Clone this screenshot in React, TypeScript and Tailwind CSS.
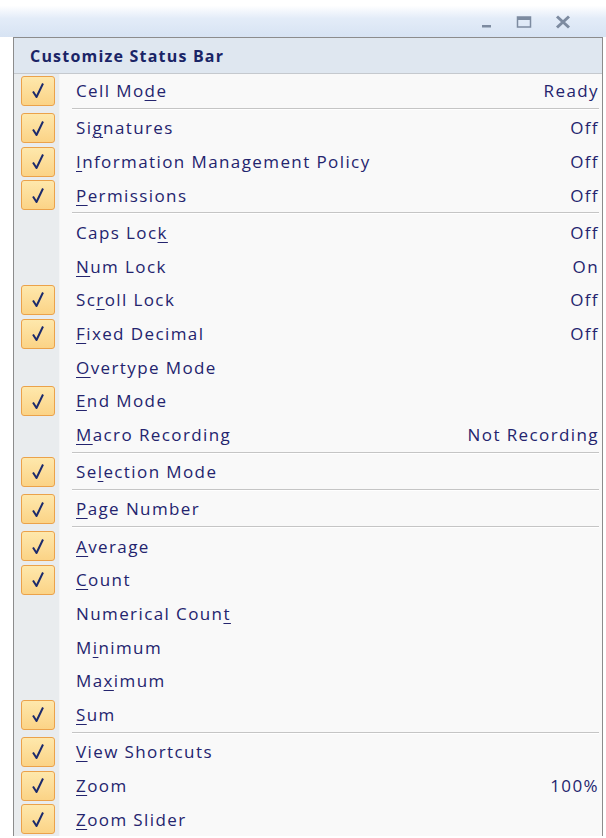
import React from 'react';

type Item = {
  label: React.ReactNode;
  value?: string;
  checked?: boolean;
  sep?: boolean; // draw a divider after this row
};

const u = (s: string) => <u className="underline underline-offset-[3px] decoration-1">{s}</u>;

// Status bar entries, in menu order
const items: Item[] = [
  { label: <>Cell Mo{u('d')}e</>, value: 'Ready', checked: true, sep: true },
  { label: <>Si{u('g')}natures</>, value: 'Off', checked: true },
  { label: <>{u('I')}nformation Management Policy</>, value: 'Off', checked: true },
  { label: <>{u('P')}ermissions</>, value: 'Off', checked: true, sep: true },
  { label: <>Caps Loc{u('k')}</>, value: 'Off' },
  { label: <>{u('N')}um Lock</>, value: 'On' },
  { label: <>Sc{u('r')}oll Lock</>, value: 'Off', checked: true },
  { label: <>{u('F')}ixed Decimal</>, value: 'Off', checked: true },
  { label: <>{u('O')}vertype Mode</> },
  { label: <>{u('E')}nd Mode</>, checked: true },
  { label: <>{u('M')}acro Recording</>, value: 'Not Recording', sep: true },
  { label: <>Se{u('l')}ection Mode</>, checked: true, sep: true },
  { label: <>{u('P')}age Number</>, checked: true, sep: true },
  { label: <>{u('A')}verage</>, checked: true },
  { label: <>{u('C')}ount</>, checked: true },
  { label: <>Numerical Coun{u('t')}</> },
  { label: <>M{u('i')}nimum</> },
  { label: <>Ma{u('x')}imum</> },
  { label: <>{u('S')}um</>, checked: true, sep: true },
  { label: <>{u('V')}iew Shortcuts</>, checked: true },
  { label: <>{u('Z')}oom</>, value: '100%', checked: true },
  { label: <>{u('Z')}oom Slider</>, checked: true },
];

function CheckBox() {
  return (
    <div className="ml-[7px] flex h-[30px] w-[34px] items-center justify-center rounded-[3px] border border-[#eba24a] bg-gradient-to-b from-[#fee8ac] to-[#fbd386]">
      <svg width="14" height="17" viewBox="0 0 14 17">
        <path d="M2 9.5 L5.5 15 L12 1.5" fill="none" stroke="#1c2a6c" strokeWidth="2" strokeLinejoin="round" />
      </svg>
    </div>
  );
}

function Row({ item }: { item: Item }) {
  return (
    <div className="flex h-[33.7px]">
      <div className="flex w-[46px] shrink-0 items-center border-r border-[#f4f5f6] bg-[#e9ecee]">
        {item.checked && <CheckBox />}
      </div>
      <div className="flex flex-1 items-center justify-between bg-[#f9f9f9] pl-[16px] pr-[3px]">
        <span>{item.label}</span>
        {item.value && <span>{item.value}</span>}
      </div>
    </div>
  );
}

function Divider() {
  return (
    <div className="flex h-[3.5px]">
      <div className="w-[46px] shrink-0 border-r border-[#f4f5f6] bg-[#e9ecee]" />
      <div className="flex-1 bg-[#f9f9f9] pl-[12px] pr-[3px]">
        <div className="h-[2px] border-t border-[#c5c5c5] border-b border-b-white" />
      </div>
    </div>
  );
}

function WindowButtons() {
  return (
    <div className="flex items-center gap-[22px] pr-[34px] pt-[6px]">
      <svg width="14" height="14" viewBox="0 0 14 14">
        <rect x="2" y="10" width="9" height="2.5" fill="#7d8ba0" />
      </svg>
      <svg width="16" height="14" viewBox="0 0 16 14">
        <rect x="1.5" y="2" width="13" height="10" fill="none" stroke="#7d8ba0" strokeWidth="1.5" />
        <rect x="1.5" y="2" width="13" height="3" fill="#7d8ba0" />
      </svg>
      <svg width="18" height="16" viewBox="0 0 18 16">
        <path d="M3 2.5 L15 13.5 M15 2.5 L3 13.5" stroke="#7d8ba0" strokeWidth="3" />
      </svg>
    </div>
  );
}

export default function App() {
  return (
    <div className="h-[838px] w-[606px] overflow-hidden bg-white font-['Open_Sans',sans-serif] text-[17px] font-medium tracking-[1.4px] text-[#24246e]">
      {/* title strip with window controls */}
      <div className="flex h-[37px] justify-end bg-gradient-to-b from-white from-15% via-[#e3ecf8] to-[#d7e3f3]">
        <WindowButtons />
      </div>

      <div className="ml-[13px] mr-[3px] border border-b-0 border-[#8c8c8c]">
        <div className="flex h-[36px] items-center border-b border-[#c5c9ce] bg-[#dfe7f0] pl-[16px] text-[16px] font-bold tracking-[1.2px] text-[#1a2466]">
          Customize Status Bar
        </div>
        {items.map((item, i) => (
          <React.Fragment key={i}>
            <Row item={item} />
            {item.sep && <Divider />}
          </React.Fragment>
        ))}
      </div>
    </div>
  );
}
